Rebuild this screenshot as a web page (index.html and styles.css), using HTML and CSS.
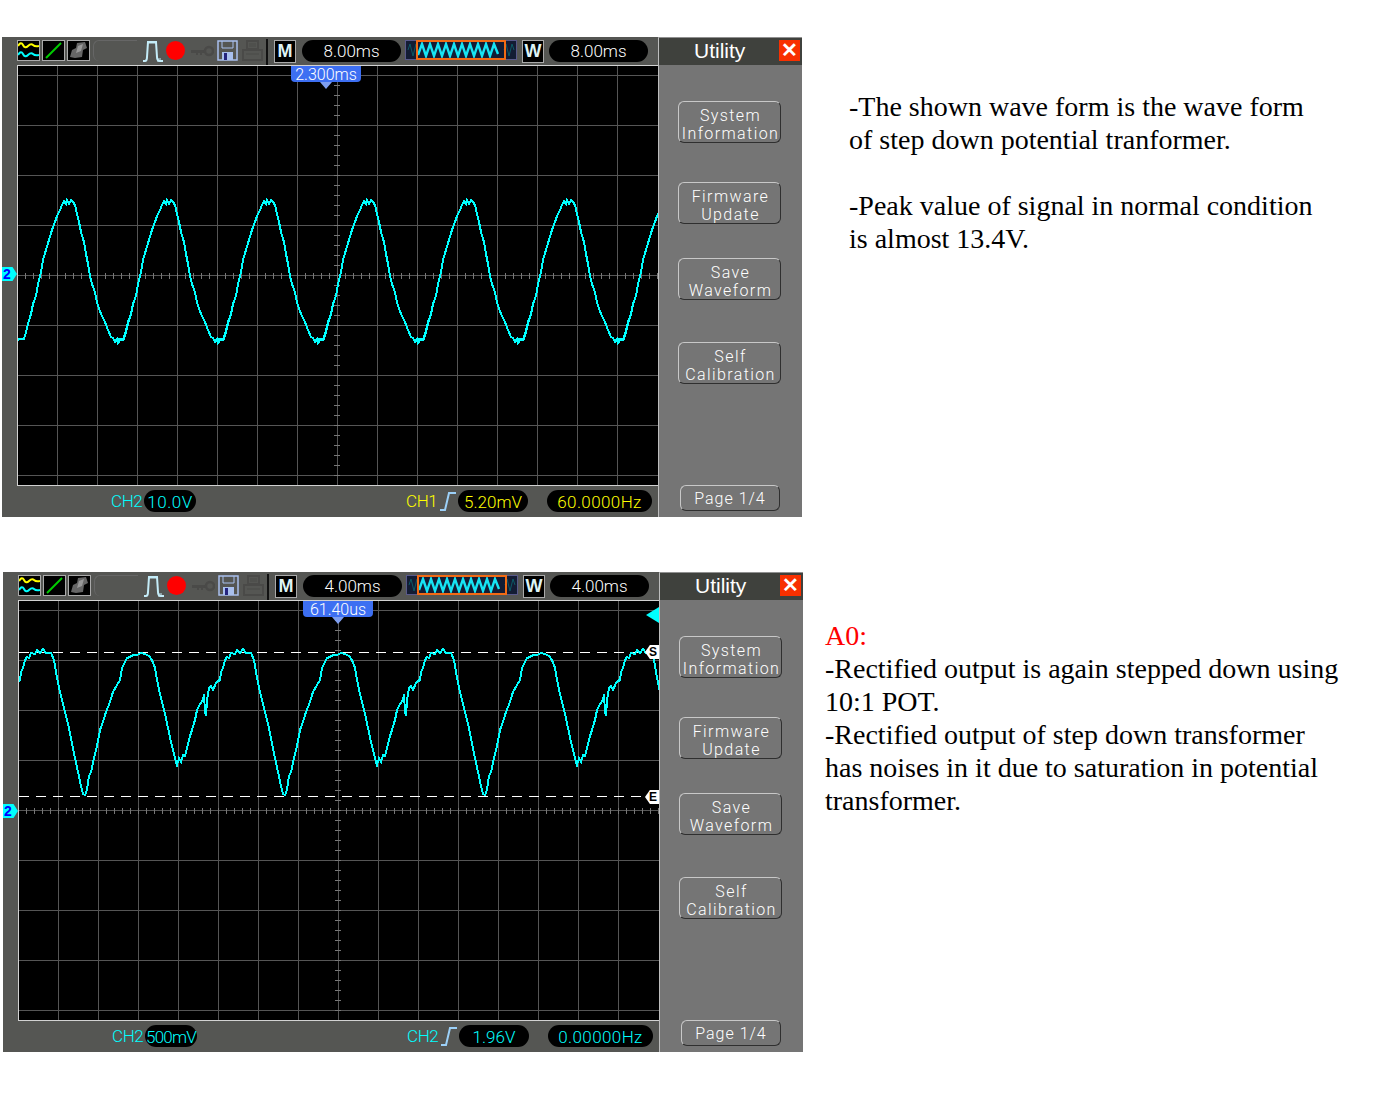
FILE: index.html
```html
<!DOCTYPE html>
<html lang="en">
  <head>
    <meta charset="UTF-8" />
    <title>Oscilloscope readings</title>
    <link rel="stylesheet" href="styles.css">
  </head>
  <body>
    <!-- shared drawings for both scope captures -->
    <svg class="defs" width="0" height="0">
      <defs>
        <pattern id="tickx" width="8" height="6" patternUnits="userSpaceOnUse" x="0" y="207">
          <rect x="7" width="1" height="6" fill="#777" />
        </pattern>
        <pattern id="ticky" width="6" height="10" patternUnits="userSpaceOnUse" x="316" y="0">
          <rect y="9" width="6" height="1" fill="#777" />
        </pattern>
        <g id="grid" stroke="#555" stroke-width="1" shape-rendering="crispEdges">
          <path d="M39.5 0V419M79.5 0V419M119.5 0V419M159.5 0V419M199.5 0V419M239.5 0V419M279.5 0V419M319.5 0V419M359.5 0V419M399.5 0V419M439.5 0V419M479.5 0V419M519.5 0V419M559.5 0V419M599.5 0V419" />
          <path d="M0 9.5H640M0 59.5H640M0 109.5H640M0 159.5H640M0 209.5H640M0 259.5H640M0 309.5H640M0 359.5H640M0 409.5H640" />
          <rect x="0" y="207" width="640" height="6" fill="url(#tickx)" stroke="none" />
          <rect x="316" y="0" width="6" height="419" fill="url(#ticky)" stroke="none" />
        </g>
        <path id="cycle" d="M18 341L19 339L24 339L26 332L28 324L31 314L33 304L36 296L38 284L41 272L43 260L46 250L49 240L52 230L55 222L57 216L60 210L62 205L64 201L66 204L67 200L69 204L71 200L73 202L75 205L77 214L79 222L81 232L84 242L86 254L88 264L90 276L92 284L95 292L97 302L99 309L102 316L105 322L108 330L111 337L113 338L115 342L117 339L118 343L120 340L123 340L125 334L127 326L129 318" />
        <path id="cycle2" d="M18 682L20 680L21 672L23 668L25 660L27 657L29 658L31 653L35 654L37 650L40 653L43 649L46 653L51 653L54 660L56 672L58 682L60 692L62 700L64 708L66 716L68 724L70 733L72 744L75 758L78 772L81 786L83 794L85 795L87 790L89 776L91 772L94 758L97 746L100 730L103 722L106 712L110 702L113 692L117 685L120 680L122 668L125 662L127 658L130 657L133 655L137 655L141 653L145 654L149 656L152 660L155 668L157 680L160 694L162 702L165 714L168 728L171 742L174 754L176 762L177 765L179 758L181 762L183 755L185 756L188 744L190 736L192 730L195 720L197 710L200 704L203 700L204 694L205 712L206 716L207 700L209 688L211 686L213 690L216 683L219 680" />
        <symbol id="ic-wave" viewBox="0 0 21 19">
          <path d="M0 5Q3 0 5 4T10 5T15 4T21 5" fill="none" stroke="#ff0" stroke-width="2" />
          <path d="M0 14Q3 9 5 13T10 14T15 13T21 14" fill="none" stroke="#0ff" stroke-width="2" />
        </symbol>
        <symbol id="ic-xy" viewBox="0 0 21 19">
          <path d="M3 17L18 2" stroke="#0c0" stroke-width="2" />
        </symbol>
        <symbol id="ic-persist" viewBox="0 0 21 19">
          <path d="M2 16L4 9L8 7L9 2L17 1L19 7L15 9L14 16L7 17Z" fill="#666" />
          <path d="M8 12L10 5L15 3L13 10Z" fill="#999" />
        </symbol>
        <symbol id="ic-pulse" viewBox="0 0 21 24">
          <path d="M1 22H3Q5 22 5 18L6 3H14L15 18Q15 22 18 22H21" fill="none" stroke="#c4ecf8" stroke-width="2" />
          <path d="M6 2V5M8 2V5M10 2V5M12 2V5M14 2V5M16 19V23M18 19V23" stroke="#c4ecf8" stroke-width="1" />
        </symbol>
        <symbol id="ic-key" viewBox="0 0 23 12">
          <path d="M0 5H14V8H11V10H9V8H7V10H5V8H0Z" fill="#4a4a48" />
          <circle cx="18" cy="6" r="4" fill="none" stroke="#4a4a48" stroke-width="2.5" />
        </symbol>
        <symbol id="ic-save" viewBox="0 0 21 21">
          <path d="M1 1H20V20H1Z" fill="none" stroke="#a9c0ee" stroke-width="1.5" />
          <path d="M5 1V8H16V1" fill="none" stroke="#a9c0ee" />
          <path d="M5 20V12H16V20" fill="#a9c0ee" />
          <rect x="7" y="13" width="3" height="7" fill="#24247e" />
        </symbol>
        <symbol id="ic-print" viewBox="0 0 21 21">
          <path d="M5 1H16V9H5ZM1 10H20V20H1Z" fill="none" stroke="#4a4a48" stroke-width="2" />
          <path d="M7 4H14M7 6H14M4 14H17" stroke="#4a4a48" />
        </symbol>
        <symbol id="ic-edge" viewBox="0 0 18 20">
          <path d="M1 19H6L10 2H17" fill="none" stroke="#9cd0f8" stroke-width="2" />
        </symbol>
        <symbol id="ic-over" viewBox="0 0 112 20">
          <path d="M1 10l2-6 3 12 3-12 2 6" transform="translate(2 0)" fill="none" stroke="#0b5a66" />
          <path d="M1 10l2-6 3 12 3-12 2 6" transform="translate(98 0)" fill="none" stroke="#0b5a66" />
          <path d="M13 15L17 4L21 16L25 4L29 16L33 4L37 16L41 4L45 16L49 4L53 16L57 4L61 16L65 4L69 16L73 4L77 16L81 4L85 16L89 4L93 14" fill="none" stroke="#16e4f4" stroke-width="2.4" />
        </symbol>
      </defs>
    </svg>

    <div class="sheet">
      <section class="row row-first">
        <div class="scope">
          <div class="scope-main">
            <div class="toolbar">
              <span class="box"><svg><use href="#ic-wave" /></svg></span>
              <span class="box"><svg><use href="#ic-xy" /></svg></span>
              <span class="box"><svg><use href="#ic-persist" /></svg></span>
              <span class="slot"></span>
              <svg class="ic-pulse"><use href="#ic-pulse" /></svg>
              <span class="dot"></span>
              <svg class="ic-key"><use href="#ic-key" /></svg>
              <svg class="ic-save"><use href="#ic-save" /></svg>
              <svg class="ic-print"><use href="#ic-print" /></svg>
              <span class="sep"></span>
              <span class="letter">M</span>
              <span class="pill time">8.00ms</span>
              <span class="overview"><svg><use href="#ic-over" /></svg><i></i></span>
              <span class="letter letter-w">W</span>
              <span class="pill time time-w">8.00ms</span>
            </div>
            <div class="screen">
              <svg class="trace" viewBox="0 0 640 419" width="640" height="419">
                <use href="#grid" />
                <g transform="translate(-18 -66)" fill="none" stroke="#0ff" stroke-width="2" shape-rendering="crispEdges">
                  <use href="#cycle" />
                  <use href="#cycle" x="100" />
                  <use href="#cycle" x="200" />
                  <use href="#cycle" x="300" />
                  <use href="#cycle" x="400" />
                  <use href="#cycle" x="500" />
                  <use href="#cycle" x="600" />
                </g>
              </svg>
              <span class="tag tag-one">2.300ms</span>
              <span class="marker marker-one">2</span>
            </div>
            <div class="status">
              <span class="ch cyan ch-left">CH2</span>
              <span class="pill volts cyan">10.0V</span>
              <span class="ch yellow ch-trig">CH1</span>
              <svg class="ic-edge"><use href="#ic-edge" /></svg>
              <span class="pill level yellow">5.20mV</span>
              <span class="pill freq yellow">60.0000Hz</span>
            </div>
          </div>
          <aside class="menu">
            <div class="menu-title"><span>Utility</span><b class="close">✕</b></div>
            <button class="soft btn-info">System<br>Information</button>
            <button class="soft btn-firm">Firmware<br>Update</button>
            <button class="soft btn-save">Save<br>Waveform</button>
            <button class="soft btn-cal">Self<br>Calibration</button>
            <button class="soft btn-page">Page 1/4</button>
          </aside>
        </div>
        <div class="note note-first">
          <p>-The shown wave form is the wave form<br>of step down potential tranformer.</p>
          <p>-Peak value of signal in normal condition<br>is almost 13.4V.</p>
        </div>
      </section>

      <section class="row row-second">
        <div class="scope">
          <div class="scope-main">
            <div class="toolbar">
              <span class="box"><svg><use href="#ic-wave" /></svg></span>
              <span class="box"><svg><use href="#ic-xy" /></svg></span>
              <span class="box"><svg><use href="#ic-persist" /></svg></span>
              <span class="slot"></span>
              <svg class="ic-pulse"><use href="#ic-pulse" /></svg>
              <span class="dot"></span>
              <svg class="ic-key"><use href="#ic-key" /></svg>
              <svg class="ic-save"><use href="#ic-save" /></svg>
              <svg class="ic-print"><use href="#ic-print" /></svg>
              <span class="sep"></span>
              <span class="letter">M</span>
              <span class="pill time">4.00ms</span>
              <span class="overview"><svg><use href="#ic-over" /></svg><i></i></span>
              <span class="letter letter-w">W</span>
              <span class="pill time time-w">4.00ms</span>
            </div>
            <div class="screen">
              <svg class="trace" viewBox="0 0 640 419" width="640" height="419">
                <use href="#grid" />
                <g transform="translate(-19 -601)">
                  <path d="M19 652.5H646M19 796.5H646" stroke="#fff" stroke-dasharray="10 7" fill="none" shape-rendering="crispEdges" />
                  <g fill="none" stroke="#0ff" stroke-width="2" shape-rendering="crispEdges">
                    <use href="#cycle2" />
                    <use href="#cycle2" x="200" />
                    <use href="#cycle2" x="400" />
                    <use href="#cycle2" x="600" />
                  </g>
                </g>
              </svg>
              <span class="tag tag-two">61.40us</span>
              <span class="marker marker-two">2</span>
              <span class="trig-arrow"></span>
              <span class="cursor cursor-s">S</span>
              <span class="cursor cursor-e">E</span>
            </div>
            <div class="status">
              <span class="ch cyan ch-left">CH2</span>
              <span class="pill volts volts-tight cyan">500mV</span>
              <span class="ch cyan ch-trig">CH2</span>
              <svg class="ic-edge"><use href="#ic-edge" /></svg>
              <span class="pill level cyan">1.96V</span>
              <span class="pill freq cyan">0.00000Hz</span>
            </div>
          </div>
          <aside class="menu">
            <div class="menu-title"><span>Utility</span><b class="close">✕</b></div>
            <button class="soft btn-info">System<br>Information</button>
            <button class="soft btn-firm">Firmware<br>Update</button>
            <button class="soft btn-save">Save<br>Waveform</button>
            <button class="soft btn-cal">Self<br>Calibration</button>
            <button class="soft btn-page">Page 1/4</button>
          </aside>
        </div>
        <div class="note note-second">
          <p><span class="red">A0:</span><br>-Rectified output is again stepped down using<br>10:1 POT.<br>-Rectified output of step down transformer<br>has noises in it due to saturation in potential<br>transformer.</p>
        </div>
      </section>
    </div>
  </body>
</html>
```

FILE: styles.css
```css
* {
  margin: 0;
  padding: 0;
  box-sizing: border-box;
}

body {
  background: white;
  font-family: "Liberation Serif", "Times New Roman", serif;
  color: black;
}

.defs {
  display: block;
  height: 0;
}

.sheet {
  min-height: 1120px;
  padding-top: 37px;
}

.row {
  display: flex;
  align-items: flex-start;
}

.row-first {
  margin-left: 2px;
}

.row-second {
  margin-left: 3px;
  margin-top: 55px;
}

/* scope capture */
.scope {
  display: flex;
  width: 800px;
  height: 480px;
  flex-shrink: 0;
  background: #555653;
  font-family: Roboto, "Liberation Sans", sans-serif;
  font-weight: 300;
}

.scope-main {
  width: 656px;
  display: flex;
  flex-direction: column;
}

.toolbar {
  height: 28px;
  display: flex;
  align-items: flex-start;
  padding: 3px 0 0 15px;
}

.toolbar svg {
  display: block;
  flex-shrink: 0;
}

.box {
  width: 23px;
  height: 21px;
  margin-right: 2px;
  background: black;
  border: 1px solid #aaa;
}

.box svg {
  width: 21px;
  height: 19px;
}

.slot {
  width: 44px;
  height: 21px;
  margin-left: 1px;
  border: 1px solid #666;
  border-right: none;
  border-bottom: none;
  border-radius: 6px 0 0 6px;
}

.ic-pulse {
  width: 21px;
  height: 24px;
  margin-left: 5px;
  margin-top: -1px;
}

.dot {
  width: 19px;
  height: 19px;
  margin: 1px 0 0 3px;
  border-radius: 50%;
  background: #f00;
}

.ic-key {
  width: 23px;
  height: 12px;
  margin: 5px 0 0 6px;
}

.ic-save {
  width: 21px;
  height: 21px;
  margin-left: 3px;
}

.ic-print {
  width: 21px;
  height: 21px;
  margin-left: 4px;
}

.sep {
  width: 2px;
  height: 26px;
  margin: -1px 0 0 3px;
  background: #111;
}

.letter {
  width: 22px;
  height: 23px;
  margin-left: 6px;
  background: black;
  border: 1px solid #aaa;
  color: #dff4f6;
  font: bold 18px/21px "Liberation Sans", sans-serif;
  text-align: center;
}

.letter-w {
  margin-left: 5px;
}

.pill {
  background: black;
  border-radius: 11px;
  text-align: center;
  white-space: nowrap;
}

.time {
  width: 99px;
  height: 22px;
  margin-left: 6px;
  color: white;
  font-size: 17px;
  line-height: 23px;
}

.time-w {
  margin-left: 5px;
}

.overview {
  position: relative;
  width: 112px;
  height: 20px;
  margin: 0 0 0 4px;
  background: #131c34;
  border: 1px solid #59598a;
}

.overview svg {
  position: absolute;
  left: -1px;
  top: -1px;
  width: 112px;
  height: 20px;
}

.overview i {
  position: absolute;
  left: 10px;
  top: -1px;
  width: 90px;
  height: 20px;
  border: 2px solid #f26a14;
}

.screen {
  position: relative;
  height: 421px;
  margin-left: 15px;
  background: black;
  border: 1px solid #d2d2d2;
  border-right: none;
}

.trace {
  display: block;
}

.tag {
  position: absolute;
  top: 0;
  height: 16px;
  width: 70px;
  background: #3d6ff2;
  border-radius: 0 0 4px 4px;
  color: white;
  font-size: 16px;
  line-height: 18px;
  text-align: center;
}

.tag::after {
  content: "";
  position: absolute;
  left: 29px;
  top: 16px;
  border: 6px solid transparent;
  border-top: 7px solid #7e9ef0;
  border-bottom: none;
}

.tag-one {
  left: 273px;
}

.tag-two {
  left: 284px;
}

.marker {
  position: absolute;
  left: -16px;
  top: 201px;
  width: 15px;
  height: 14px;
  background: #0ff;
  clip-path: polygon(0 0, 70% 0, 100% 50%, 70% 100%, 0 100%);
  color: #00f;
  font: bold 14px/14px "Liberation Sans", sans-serif;
  padding-left: 1px;
}

.marker-two {
  top: 203px;
}

.trig-arrow {
  position: absolute;
  right: 0;
  top: 6px;
  border: 8px solid transparent;
  border-right: 13px solid #0ff;
  border-left: none;
}

.cursor {
  position: absolute;
  right: 0;
  width: 14px;
  height: 14px;
  background: white;
  clip-path: polygon(0 50%, 35% 0, 100% 0, 100% 100%, 35% 100%);
  color: black;
  font: bold 12px/14px "Liberation Sans", sans-serif;
  text-align: right;
  padding-right: 2px;
}

.cursor-s {
  top: 44px;
}

.cursor-e {
  top: 189px;
}

.status {
  position: relative;
  flex: 1;
  display: flex;
  align-items: flex-start;
  padding: 4px 0 0 109px;
  font-size: 17px;
  line-height: 22px;
}

.cyan {
  color: #0ff;
}

.yellow {
  color: #ff0;
}

.ch {
  width: 33px;
  line-height: 23px;
  letter-spacing: -0.4px;
}

.volts {
  width: 52px;
  height: 22px;
  line-height: 24px;
  letter-spacing: 0.5px;
}

.volts-tight {
  letter-spacing: -0.8px;
}

.ch-trig {
  margin-left: 210px;
}

.ic-edge {
  width: 18px;
  height: 20px;
  margin-top: 1px;
}

.level {
  width: 70px;
  height: 22px;
  margin-left: 1px;
  line-height: 24px;
}

.freq {
  width: 105px;
  height: 22px;
  margin-left: 19px;
  line-height: 24px;
  letter-spacing: 0.4px;
}

/* side menu */
.menu {
  width: 144px;
  display: flex;
  flex-direction: column;
  align-items: flex-start;
  background: #757575;
  border-left: 1px solid #bdbdbd;
  border-top: 1px solid #909090;
}

.menu-title {
  width: 100%;
  height: 27px;
  display: flex;
  justify-content: space-between;
  background: #3f413d;
  color: white;
  font-family: "Liberation Sans", sans-serif;
  font-weight: 400;
  font-size: 21px;
  line-height: 26px;
  padding-left: 35px;
}

.close {
  width: 21px;
  height: 21px;
  margin: 2px 2px 0 0;
  background: #f83000;
  color: white;
  font-size: 20px;
  line-height: 21px;
  text-align: center;
}

.soft {
  width: 103px;
  height: 42px;
  margin-left: 19px;
  padding: 5px 0 0 2px;
  background: transparent;
  border: 1px solid #2f2f2f;
  border-top-color: #c8c8c8;
  border-left-color: #c8c8c8;
  border-radius: 6px;
  color: white;
  font-family: Roboto, "Liberation Sans", sans-serif;
  font-weight: 300;
  font-size: 16px;
  line-height: 18px;
  letter-spacing: 1.4px;
  white-space: nowrap;
  overflow: visible;
}

.btn-info {
  margin-top: 36px;
}

.btn-firm {
  margin-top: 39px;
}

.btn-save {
  margin-top: 34px;
}

.btn-cal {
  margin-top: 42px;
}

.btn-page {
  height: 26px;
  width: 100px;
  padding: 2px 0 0;
  letter-spacing: 1px;
  margin: auto 0 6px 21px;
}

/* notes beside the captures */
.note {
  font-size: 28px;
  line-height: 33px;
}

.note p + p {
  margin-top: 33px;
}

.note-first {
  margin: 53px 0 0 47px;
}

.note-second {
  margin: 47px 0 0 22px;
}

.red {
  color: #f00;
}
```
